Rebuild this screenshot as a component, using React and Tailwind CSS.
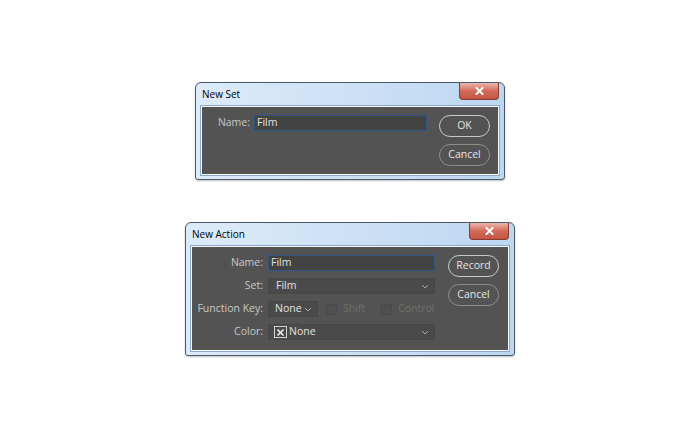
const font = { fontFamily: '"Open Sans", "Noto Sans", sans-serif' };

function Chevron() {
  return (
    <svg width="8" height="5" viewBox="0 0 8 5" className="ml-auto">
      <path d="M1 1 L4 4 L7 1" fill="none" stroke="#a8a8a8" strokeWidth="1" />
    </svg>
  );
}

function Window({ title, width, height, children }) {
  return (
    <div
      className="relative flex flex-col rounded-t-[6px] rounded-b-[3px] border border-[#4a5868] bg-gradient-to-r from-[#dcebf9] via-[#cde1f5] to-[#bcd7f1] px-[5px] pb-[4px] shadow-[0_1px_2px_rgba(0,0,0,0.25)]"
      style={{ width, height }}
    >
      <div className="flex h-[23px] items-center pl-[1px] text-[10px] text-black">{title}</div>
      <div className="absolute right-[5px] top-0 flex h-[17px] w-[40px] items-center justify-center rounded-b-[4px] border border-t-0 border-[#8a3a30] bg-gradient-to-b from-[#ebb5ac] via-[#d26a5a] to-[#c65442]">
        <svg width="9" height="8" viewBox="0 0 9 8">
          <path d="M1.5 1 L7.5 7 M7.5 1 L1.5 7" stroke="#fff" strokeWidth="1.9" strokeLinecap="square" />
        </svg>
      </div>
      <div className="flex-1 border border-[#f2f8fd] bg-[#535353] outline outline-1 outline-[#8fa9c4]">{children}</div>
    </div>
  );
}

function PsButton({ children, strong }) {
  return (
    <div
      className={`flex h-[22px] w-[51px] items-center justify-center rounded-full border text-[10.5px] text-[#e4e4e4] ${
        strong ? 'border-[#c8c8c8]' : 'border-[#8c8c8c]'
      }`}
    >
      {children}
    </div>
  );
}

function Checkbox({ label, className }) {
  return (
    <div className={`flex items-center gap-[6px] text-[10.5px] text-[#6f6f6f] ${className}`}>
      <div className="h-[11px] w-[11px] rounded-[2px] border border-[#4a4a4a] bg-[#4f4f4f]" />
      {label}
    </div>
  );
}

const label = 'text-right text-[10.5px] text-[#c9c9c9]';
const field = 'flex h-[16px] items-center border text-[10.5px] text-[#e2e2e2]';

export default function App() {
  return (
    <div className="flex h-[439px] w-[700px] flex-col items-center bg-white pt-[82px]" style={font}>
      <Window title="New Set" width={310} height={98}>
        <div className="flex gap-[12px] pt-[8px]">
          <div className="flex h-[16px] items-center gap-[4px]">
            <span className={`w-[48px] ${label}`}>Name:</span>
            <div className={`${field} w-[173px] border-[#2e5585] bg-[#434343] pl-[2px]`}>Film</div>
          </div>
          <div className="flex flex-col gap-[7px]">
            <PsButton strong>OK</PsButton>
            <PsButton>Cancel</PsButton>
          </div>
        </div>
      </Window>

      <div className="h-[42px]" />

      <Window title="New Action" width={330} height={134}>
        <div className="flex gap-[12px] pt-[8px]">
          <div className="grid w-[244px] grid-cols-[71px_1fr] items-center gap-x-[5px] gap-y-[7px]">
            <span className={label}>Name:</span>
            <div className={`${field} w-[167px] border-[#2e5585] bg-[#434343] pl-[2px]`}>Film</div>
            <span className={label}>Set:</span>
            <div className={`${field} w-[167px] border-[#474747] bg-[#4a4a4a] pl-[7px] pr-[5px]`}>
              Film
              <Chevron />
            </div>
            <span className={label}>Function Key:</span>
            <div className="flex items-center">
              <div className={`${field} w-[50px] border-[#474747] bg-[#4a4a4a] pl-[6px] pr-[5px]`}>
                None
                <Chevron />
              </div>
              <Checkbox label="Shift" className="ml-[8px]" />
              <Checkbox label="Control" className="ml-[16px]" />
            </div>
            <span className={label}>Color:</span>
            <div className={`${field} w-[167px] gap-[2px] border-[#474747] bg-[#4a4a4a] pl-[5px] pr-[5px]`}>
              <div className="flex h-[12px] w-[13px] items-center justify-center border border-[#d0d0d0]">
                <svg width="7" height="7" viewBox="0 0 7 7">
                  <path d="M0.5 0.5 L6.5 6.5 M6.5 0.5 L0.5 6.5" stroke="#e6e6e6" strokeWidth="1.6" />
                </svg>
              </div>
              None
              <Chevron />
            </div>
          </div>
          <div className="flex flex-col gap-[7px]">
            <PsButton strong>Record</PsButton>
            <PsButton>Cancel</PsButton>
          </div>
        </div>
      </Window>
    </div>
  );
}
